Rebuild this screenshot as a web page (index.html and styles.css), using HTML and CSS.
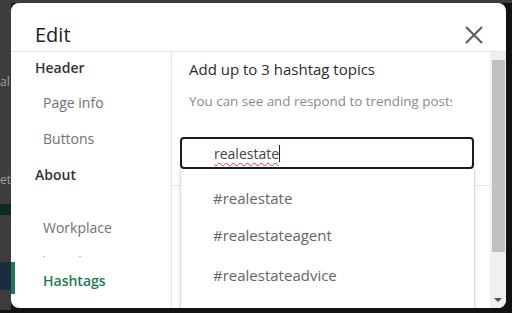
FILE: index.html
```html
<!doctype html>
<html lang="en">
    <head>
        <meta charset="UTF-8">
        <title>Edit</title>
        <link rel="stylesheet" href="styles.css">
    </head>
    <body>
        <div class="screen">
            <!-- page behind the dialog, mostly hidden -->
            <div class="backdrop">
                <div class="bd-text bd-al">al</div>
                <div class="bd-text bd-et">et</div>
                <div class="bd-green"></div>
                <div class="bd-navy"></div>
            </div>

            <div class="modal">
                <div class="modal-header">
                    <h2 class="modal-title">Edit</h2>
                    <span class="close">
                        <svg width="18" height="18" viewBox="0 0 18 18">
                            <path d="M1 1 L17 17 M17 1 L1 17" stroke="#5a5a5a" stroke-width="2" fill="none"/>
                        </svg>
                    </span>
                </div>

                <div class="modal-body">
                    <nav class="side-nav">
                        <div class="nav-item nav-head first">Header</div>
                        <div class="nav-item">Page info</div>
                        <div class="nav-item">Buttons</div>
                        <div class="nav-item nav-head">About</div>
                        <div class="nav-item workplace">Workplace</div>
                        <div class="nav-hidden"><span></span><span></span></div>
                        <div class="nav-item active">Hashtags</div>
                    </nav>

                    <div class="content">
                        <div class="content-inner">
                            <h3 class="topic-title">Add up to 3 hashtag topics</h3>
                            <p class="topic-sub">You can see and respond to trending posts about these topics</p>

                            <div class="search-box">
                                <span class="search-text">realestate</span><span class="caret"></span>
                            </div>
                            <div class="divider"></div>

                            <!-- typeahead suggestions -->
                            <ul class="suggestions">
                                <li>#realestate</li>
                                <li>#realestateagent</li>
                                <li class="last">#realestateadvice</li>
                            </ul>
                        </div>

                        <div class="scrollbar">
                            <div class="thumb"></div>
                            <div class="arrow-down"></div>
                        </div>
                    </div>
                </div>
            </div>
        </div>
    </body>
</html>
```

FILE: styles.css
```css
* {
    box-sizing: border-box;
}
html, body {
    margin: 0;
    padding: 0;
}
body {
    font-family: "Open Sans", "Noto Sans", sans-serif;
    background-color: #111;
}

.screen {
    display: flex;
    width: 512px;
    height: 313px;
    padding-top: 3px;
    background: linear-gradient(#3c3c3c 3px, #121212 3px);
    overflow: hidden;
}

/* Page behind the overlay */
.backdrop {
    position: relative;
    width: 11px;
    height: 310px;
    margin-top: -3px;
    background-color: #3d3d3d;
    overflow: hidden;
    flex-shrink: 0;
}
.bd-text {
    position: absolute;
    left: 0;
    font-size: 12px;
    line-height: 14px;
    color: #a0a0a0;
}
.bd-al { top: 75px; }
.bd-et { top: 173px; }
.bd-green {
    position: absolute;
    top: 204px;
    left: 0;
    width: 11px;
    height: 11px;
    background-color: #0c2a1d;
}
.bd-navy {
    position: absolute;
    top: 262px;
    left: 0;
    width: 11px;
    height: 28px;
    background-color: #1a2b40;
}

/* Dialog */
.modal {
    width: 495px;
    height: 305px;
    background-color: #fff;
    border-radius: 8px;
    overflow: hidden;
    display: flex;
    flex-direction: column;
    flex-shrink: 0;
}

.modal-header {
    height: 49px;
    display: flex;
    align-items: center;
    justify-content: space-between;
    padding: 15px 23px 0 24px;
    border-bottom: 1px solid #e8e8e8;
    flex-shrink: 0;
}
.modal-title {
    margin: 0;
    font-size: 20px;
    font-weight: 400;
    color: #222;
}
.close {
    display: flex;
    width: 18px;
    height: 18px;
}

.modal-body {
    display: flex;
    flex: 1;
    min-height: 0;
}

/* Left navigation */
.side-nav {
    width: 161px;
    border-right: 1px solid #e4e4e4;
    flex-shrink: 0;
}
.nav-item {
    height: 36px;
    display: flex;
    align-items: center;
    padding-left: 32px;
    font-size: 14px;
    color: #727272;
}
.nav-head {
    padding-left: 24px;
    font-weight: 600;
    color: #333;
}
.nav-head.first {
    height: 32px;
    padding-bottom: 1px;
}
.workplace {
    margin-top: 17px;
}
.nav-hidden {
    height: 17px;
    position: relative;
}
.nav-hidden span {
    position: absolute;
    top: 11px;
    left: 32px;
    width: 2px;
    height: 1px;
    background-color: #bbb;
}
.nav-hidden span + span {
    left: 68px;
}
.nav-item.active {
    height: 32px;
    color: #1f7a52;
    font-weight: 600;
    border-left: 4px solid #1f7a52;
    padding-left: 28px;
    padding-top: 4px;
}

/* Right content */
.content {
    flex: 1;
    display: flex;
    min-width: 0;
}
.content-inner {
    flex: 1;
    position: relative;
    padding: 6px 0 0 0;
    min-width: 0;
}
.topic-title {
    margin: 0 0 0 17px;
    font-size: 15px;
    font-weight: 400;
    color: #2b2b2b;
    line-height: 22px;
}
.topic-sub {
    margin: 12px 0 0 17px;
    width: 263px;
    font-size: 13.4px;
    color: #8a8a8a;
    white-space: nowrap;
    overflow: hidden;
    line-height: 18px;
}

.search-box {
    margin: 27px 0 0 8px;
    width: 294px;
    height: 32px;
    border: 2px solid #1c1c1c;
    border-radius: 4px;
    display: flex;
    align-items: center;
    padding-left: 32px;
    padding-top: 1px;
}
.search-text {
    font-size: 14px;
    color: #444;
    text-decoration: underline wavy #e0393e;
    text-decoration-thickness: 1px;
    text-underline-offset: 3px;
}
.caret {
    width: 1px;
    height: 17px;
    background-color: #222;
}

.divider {
    margin-top: 16px;
    height: 1px;
    background-color: #e6e6e6;
}

.suggestions {
    position: absolute;
    top: 117px;
    left: 8px;
    width: 295px;
    height: 150px;
    margin: 0;
    padding: 10px 0 0 32px;
    list-style: none;
    background-color: #fff;
    border-left: 1px solid #dcdcdc;
    border-right: 1px solid #dcdcdc;
    box-shadow: 0 2px 4px rgba(0, 0, 0, 0.12);
}
.suggestions li {
    height: 37px;
    display: flex;
    align-items: center;
    font-size: 15px;
    color: #666;
}
.suggestions li.last {
    margin-top: 3px;
}

/* Scrollbar */
.scrollbar {
    position: relative;
    width: 16px;
    background-color: #f0f0f0;
    flex-shrink: 0;
}
.thumb {
    position: absolute;
    top: 8px;
    left: 2px;
    width: 13px;
    height: 192px;
    background-color: #c1c1c1;
}
.arrow-down {
    position: absolute;
    bottom: 6px;
    left: 4px;
    width: 0;
    height: 0;
    border-left: 4px solid transparent;
    border-right: 4px solid transparent;
    border-top: 4px solid #505050;
}
```
